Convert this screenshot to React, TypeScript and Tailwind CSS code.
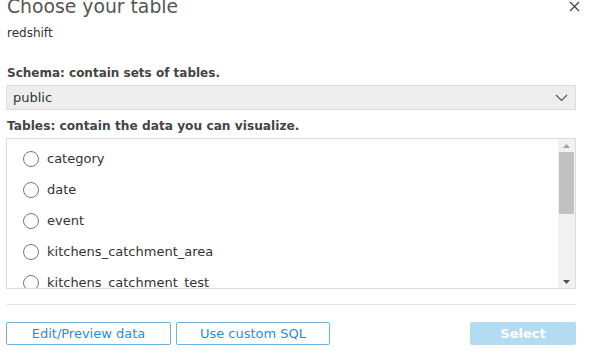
import React from "react";

const rows = [
  "category",
  "date",
  "event",
  "kitchens_catchment_area",
  "kitchens_catchment_test",
];

export default function App() {
  return (
    <div
      className="w-[595px] h-[353px] bg-white overflow-hidden relative px-[6px]"
      style={{ fontFamily: '"DejaVu Sans", "Open Sans", sans-serif' }}
    >
      <div className="flex items-start justify-between">
        <div className="mt-[-5px] pl-[1px] text-[18.8px] leading-[24px] text-[#555]">Choose your table</div>
        <svg className="mt-[1px] mr-[9px]" width="11" height="11" viewBox="0 0 11 11">
          <path d="M1 1L10 10M10 1L1 10" stroke="#444" strokeWidth="1.3" />
        </svg>
      </div>
      <div className="mt-[6px] pl-[1px] text-[12px] leading-[16px] text-[#333]">redshift</div>
      <div className="mt-[24px] pl-[1px] text-[12px] leading-[16px] font-bold text-[#444]">
        Schema: contain sets of tables.
      </div>
      <div className="mt-[4px] h-[25px] w-[570px] bg-[#eeeeee] border border-[#dcdcdc] flex items-center justify-between px-[6px]">
        <span className="text-[13px] text-[#333]">public</span>
        <svg width="13" height="8" viewBox="0 0 13 8" className="mr-[1px]">
          <path d="M1 1L6.5 6.5L12 1" stroke="#555" strokeWidth="1.2" fill="none" />
        </svg>
      </div>
      <div className="mt-[8px] pl-[1px] text-[12.2px] leading-[16px] font-bold text-[#444]">
        Tables: contain the data you can visualize.
      </div>
      <div className="mt-[4px] h-[151px] w-[570px] border border-[#dcdcdc] flex">
        <div className="flex-1 overflow-hidden pt-[4px]">
          {rows.map((r) => (
            <div key={r} className="h-[31px] flex items-center pl-[16px]">
              <span className="w-[16px] h-[16px] rounded-full border border-[#777] bg-white" />
              <span className="ml-[8px] text-[13px] text-[#333]">{r}</span>
            </div>
          ))}
        </div>
        <div className="w-[17px] bg-[#f1f1f1] flex flex-col items-center">
          <div className="h-[13px] flex items-center justify-center">
            <svg width="7" height="4" viewBox="0 0 7 4">
              <path d="M0 4L3.5 0L7 4Z" fill="#a3a3a3" />
            </svg>
          </div>
          <div className="w-[15px] h-[62px] bg-[#c1c1c1]" />
          <div className="flex-1" />
          <div className="h-[13px] flex items-center justify-center">
            <svg width="7" height="4" viewBox="0 0 7 4">
              <path d="M0 0L3.5 4L7 0Z" fill="#505050" />
            </svg>
          </div>
        </div>
      </div>
      <div className="mt-[15px] h-[1px] w-[570px] bg-[#e4e4e4]" />
      <div className="mt-[17px] w-[570px] flex items-center">
        <button className="h-[23px] w-[165px] border border-[#6cb3dd] rounded-[2px] text-[13px] text-[#2f8ccc]">
          Edit/Preview data
        </button>
        <button className="ml-[5px] h-[23px] w-[154px] border border-[#6cb3dd] rounded-[2px] text-[13px] text-[#2f8ccc]">
          Use custom SQL
        </button>
        <div className="flex-1" />
        <button className="h-[23px] w-[106px] bg-[#b3dbf1] rounded-[2px] text-[13px] text-white font-bold">
          Select
        </button>
      </div>
    </div>
  );
}
